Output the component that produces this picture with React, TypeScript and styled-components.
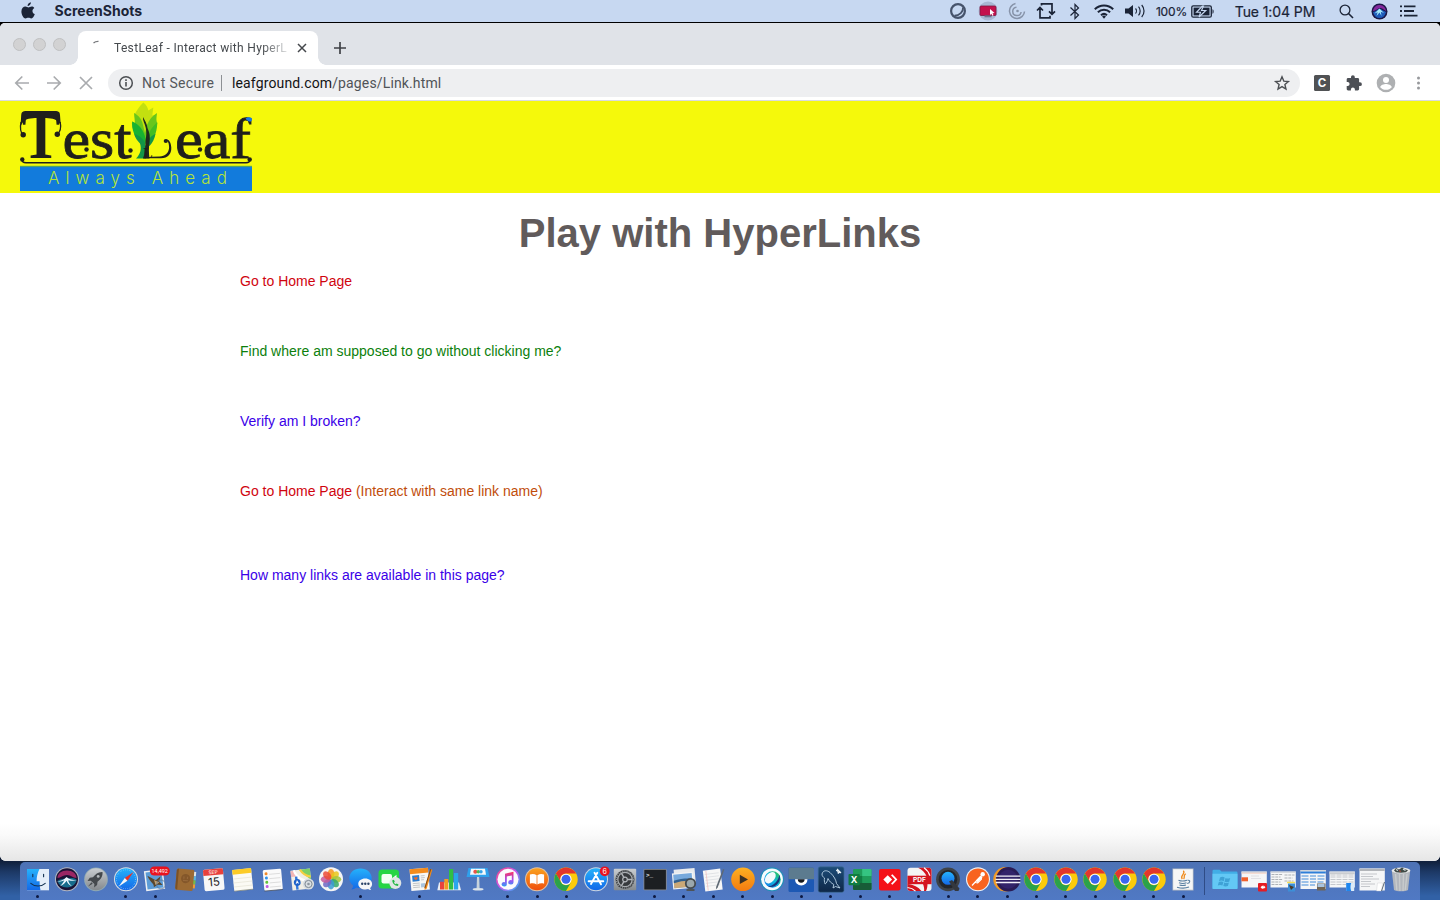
import React from "react";
import styled, { createGlobalStyle } from "styled-components";

const ink = "#1b2437";

const GlobalStyle = createGlobalStyle`
  html, body { margin: 0; padding: 0; overflow: hidden; }
  *, *::before, *::after { box-sizing: border-box; }
  svg { display: block; flex: none; overflow: visible; }
`;

const Desktop = styled.div`
  width: 1440px;
  height: 900px;
  display: flex;
  flex-direction: column;
  overflow: hidden;
  font-family: Inter, Roboto, "Liberation Sans", sans-serif;
  background:
    linear-gradient(to bottom, #000 0, #000 40px, transparent 40px),
    linear-gradient(to bottom, rgba(8, 16, 34, 0.9) 858px, rgba(12, 24, 50, 0.55) 872px, rgba(20, 40, 80, 0) 896px),
    #3161a6;
`;

/* ---------- menu bar ---------- */

const MenuBar = styled.header`
  height: 22px;
  flex: none;
  display: flex;
  align-items: center;
  background: #c7d8f1;
  margin-bottom: 1px;
  color: ${ink};
`;

const AppleSlot = styled.div`
  width: 55px;
  padding: 0 0 1px 20.5px;
`;

const AppName = styled.div`
  font-size: 14px;
  font-weight: 700;
  letter-spacing: 0.02px;
  line-height: 22px;
  white-space: nowrap;
  margin-left: -0.5px;
`;

const StatusItems = styled.div`
  display: flex;
  align-items: center;
  margin-left: auto;
  margin-right: 23px;
`;

const StatusItem = styled.div<{ $w: number }>`
  width: ${(p) => p.$w}px;
  height: 22px;
  display: flex;
  align-items: center;
  justify-content: center;
  white-space: nowrap;
`;

const Percent = styled.span`
  font-size: 12px;
  letter-spacing: -0.15px;
  padding-left: 2px;
  -webkit-text-stroke: 0.2px ${ink};
`;

const Clock = styled.span`
  font-size: 14px;
  letter-spacing: -0.1px;
  -webkit-text-stroke: 0.2px ${ink};
`;

/* ---------- browser window ---------- */

const Window = styled.main`
  height: 838px;
  flex: none;
  display: flex;
  flex-direction: column;
  border-radius: 5px 5px 6px 6px;
  overflow: hidden;
  background: #fff;
`;

const TabStrip = styled.div`
  height: 42px;
  flex: none;
  display: flex;
  align-items: flex-end;
  background: #e0e3e8;
`;

const WindowButtons = styled.div`
  display: flex;
  gap: 7px;
  width: 78px;
  padding: 0 0 14px 12.5px;
`;

const WindowButton = styled.span`
  width: 13px;
  height: 13px;
  border-radius: 50%;
  background: #d2d2d3;
  border: 1px solid #bfc0c1;
`;

const Tab = styled.div`
  position: relative;
  width: 240px;
  height: 34px;
  border-radius: 8px 8px 0 0;
  background: #fff;
  display: flex;
  align-items: center;
  padding-left: 14px;

  &::before,
  &::after {
    content: "";
    position: absolute;
    bottom: 0;
    width: 8px;
    height: 8px;
  }
  &::before {
    left: -8px;
    background: radial-gradient(circle at 0 0, transparent 7.5px, #fff 8px);
  }
  &::after {
    right: -8px;
    background: radial-gradient(circle at 100% 0, transparent 7.5px, #fff 8px);
  }
`;

const TabTitle = styled.div`
  width: 174px;
  margin-left: 6px;
  margin-right: 9px;
  white-space: nowrap;
  font-family: Roboto, "Liberation Sans", sans-serif;
  font-size: 12px;
  letter-spacing: 0.33px;
  line-height: 18px;
  color: #45494d;
  -webkit-mask-image: linear-gradient(to right, #000 148px, transparent 178px);
  mask-image: linear-gradient(to right, #000 148px, transparent 178px);
`;

const NewTab = styled.div`
  padding: 0 0 10px 15px;
`;

const Toolbar = styled.div`
  height: 36px;
  flex: none;
  display: flex;
  align-items: center;
  background: #fff;
  border-bottom: 1px solid #d9dbde;
`;

const NavButtons = styled.div`
  display: flex;
  gap: 16px;
  width: 108px;
  padding-left: 14px;
`;

const Omnibox = styled.div`
  width: 1192px;
  height: 28px;
  border-radius: 14px;
  background: #eeeff1;
  display: flex;
  align-items: center;
  padding: 0 10px;
  font-family: Roboto, "Liberation Sans", sans-serif;
  font-size: 14px;
  line-height: 28px;
  white-space: nowrap;
`;

const Security = styled.span`
  width: 80px;
  margin-left: 8px;
  letter-spacing: 0.35px;
  color: #55585c;
`;

const Divider = styled.span`
  width: 1px;
  height: 16px;
  margin-right: 10px;
  margin-left: -1px;
  background: #8d9094;
`;

const Url = styled.span`
  flex: 1;
  letter-spacing: 0.14px;
  color: #505357;
`;

const Host = styled.span`
  color: #121314;
`;

const Actions = styled.div`
  display: flex;
  align-items: center;
  gap: 12px;
  padding-left: 12px;
`;

const Content = styled.section`
  flex: 1;
  display: flex;
  flex-direction: column;
  background: linear-gradient(to top, #e6e6e6 0, #efefef 12px, #fafafa 26px, #fff 38px);
  font-family: "Liberation Sans", Arial, sans-serif;
`;

const Banner = styled.div`
  height: 92px;
  flex: none;
  padding-left: 20px;
  background: #f5f90b;
`;

const Heading = styled.h1`
  margin: 17px 0 0;
  font-size: 40px;
  line-height: 46px;
  font-weight: 700;
  text-align: center;
  color: #615b5b;
`;

const LinkList = styled.div`
  display: flex;
  flex-direction: column;
  margin: 17px 0 0 240px;
`;

const LinkRow = styled.div<{ $gap?: number }>`
  height: 16px;
  margin-bottom: ${(p) => p.$gap ?? 54}px;
  font-size: 14px;
  line-height: 16px;
  color: #c14d0b;
`;

const PageLink = styled.a<{ $color: string }>`
  color: ${(p) => p.$color};
  text-decoration: none;
`;

/* ---------- dock ---------- */

const DockBar = styled.footer`
  width: 1400px;
  height: 38px;
  flex: none;
  margin: 1px auto 0;
  padding-left: 3px;
  display: flex;
  border-radius: 5px 5px 0 0;
  background: linear-gradient(to bottom, #4d72b5, #5079c4);
`;

const DockCell = styled.div`
  width: 29.38px;
  height: 38px;
  flex: none;
  display: flex;
  flex-direction: column;
  align-items: center;
  padding-top: 4px;
`;

const RunningDot = styled.span`
  width: 3px;
  height: 3px;
  margin-top: 1px;
  border-radius: 50%;
  background: #0d1840;
`;

const DockSeparator = styled.span`
  width: 1px;
  height: 28px;
  margin: 5px 5px 0 6px;
  flex: none;
  background: #2f4c86;
`;

/* ---------- shared gradients ---------- */

const Gradients = () => (
  <svg width="0" height="0" style={{ position: "absolute" }} aria-hidden="true">
    <defs>
      <linearGradient id="silver" x1="0" y1="0" x2="0" y2="1">
        <stop offset="0" stopColor="#c9cdd0" />
        <stop offset="1" stopColor="#84898d" />
      </linearGradient>
      <linearGradient id="skyBlue" x1="0" y1="0" x2="0" y2="1">
        <stop offset="0" stopColor="#25b2fb" />
        <stop offset="1" stopColor="#1368e8" />
      </linearGradient>
      <linearGradient id="amber" x1="0" y1="0" x2="0" y2="1">
        <stop offset="0" stopColor="#fdb022" />
        <stop offset="1" stopColor="#f47b10" />
      </linearGradient>
      <linearGradient id="bookOrange" x1="0" y1="0" x2="0" y2="1">
        <stop offset="0" stopColor="#fba11d" />
        <stop offset="1" stopColor="#ef4e0d" />
      </linearGradient>
      <linearGradient id="tuneRing" x1="0" y1="0" x2="1" y2="1">
        <stop offset="0" stopColor="#f8447a" />
        <stop offset="0.5" stopColor="#c65af0" />
        <stop offset="1" stopColor="#25b6f4" />
      </linearGradient>
      <linearGradient id="note" x1="0" y1="0" x2="0" y2="1">
        <stop offset="0" stopColor="#fa3560" />
        <stop offset="0.55" stopColor="#a54df0" />
        <stop offset="1" stopColor="#2f9cf4" />
      </linearGradient>
      <linearGradient id="whale" x1="0" y1="0" x2="0" y2="1">
        <stop offset="0" stopColor="#1c4c78" />
        <stop offset="1" stopColor="#0e2747" />
      </linearGradient>
      <linearGradient id="webex" x1="0" y1="1" x2="1" y2="0">
        <stop offset="0" stopColor="#1473e8" />
        <stop offset="0.5" stopColor="#10b6e0" />
        <stop offset="1" stopColor="#2fc43c" />
      </linearGradient>
    </defs>
  </svg>
);

const Glyph = ({ children }: { children: React.ReactNode }) => (
  <svg width="28" height="28" viewBox="0 0 28 28">{children}</svg>
);

/* ---------- dock icons ---------- */

const Finder = () => (
  <Glyph>
    <rect x="3" y="3" width="22" height="21.3" fill="#e4eef9" />
    <path d="M3 3H15.5C13.5 7 12.6 11 12.6 15.2H15.6C15.5 18.5 15.8 21.5 16.5 24.3H3z" fill="url(#skyBlue)" />
    <path d="M8.8 8.3v2.5M19.6 8.3v2.5M6.8 17.3c4 3.6 10.5 3.6 14.4 0" fill="none" stroke="#12304f" strokeWidth="1.1" strokeLinecap="round" />
  </Glyph>
);

const Siri = () => (
  <Glyph>
    <circle cx="14" cy="13.3" r="12" fill="#b4b8c4" />
    <circle cx="14" cy="13.3" r="11" fill="#1a1436" />
    <path d="M4.500 12c0-4.500 4-7.500 9.500-7.500S23.500 7.500 23.500 12c-4 0-5-3-9.500-3S8 12 4.500 12z" fill="#c52c74" opacity=".75" />
    <path d="M4.500 15c2-2 6-2 9-2.500s7-1 10 1c0 4-4 8-9.500 8s-8.500-3-9.500-6.500z" fill="#1792b0" opacity=".7" />
    <path d="M3.800 15.500c4-.5 7-1.500 9.700-4.500 2.500 2.500 6 3 10.500 3-5 1.200-7.500.5-8.800.2.300 2.200 1.500 4 3.800 6-3-1-4.500-3-5.400-5.500-1.500 2-3 4-6.600 5.500 2-2 3.500-3.800 4.300-6-2.500 1.300-4.500 1.500-7.500 1.300z" fill="#ecf8ff" />
  </Glyph>
);

const Launchpad = () => (
  <Glyph>
    <circle cx="14" cy="13.3" r="11.900" fill="#8fa9b3" />
    <circle cx="14" cy="13.3" r="11" fill="url(#silver)" />
    <path d="M20.5 6c-4.500-.2-7 2-9.500 5.300l-3.200.5-2.300 3.200 3.300-.3 3.600 3.300-.3 3.500 3-2.500.4-3.300C19 13 20.900 10.500 20.500 6z" fill="#44494d" />
    <circle cx="16.2" cy="10.400" r="1.400" fill="#b4b9bc" />
    <path d="M9.500 16.200 6 20.500l4.700-2.800z" fill="#44494d" />
  </Glyph>
);

const Safari = () => (
  <Glyph>
    <circle cx="14" cy="13.3" r="12" fill="#d8dde2" />
    <circle cx="14" cy="13.3" r="11" fill="url(#skyBlue)" />
    <circle cx="14" cy="13.3" r="9.500" fill="none" stroke="#bfe3ff" strokeWidth="1" strokeDasharray=".4 1.500" />
    <path d="M21.500 6 12.800 12 15.400 14.800z" fill="#ee3124" />
    <path d="M6.500 20.800 12.800 12 15.400 14.800z" fill="#f5f6f7" />
  </Glyph>
);

const Mail = () => (
  <Glyph>
    <g transform="rotate(-7 14 14)">
      <rect x="4" y="4" width="19" height="20" fill="#eef1f3" />
      <rect x="5.500" y="5.500" width="16" height="17" fill="#5c9cd6" />
      <path d="M7 9c4 2 5 4 8 5l5-3-2 5 3 4-5-1-4 2c1-4-3-5-5-12z" fill="#59462e" />
      <path d="M13 14l5 3-4 2z" fill="#c0a071" />
    </g>
    <circle cx="20" cy="18.500" r="4.300" fill="none" stroke="#5f7898" strokeWidth="1.200" opacity=".65" />
    <rect x="8.800" y="0.400" width="20" height="9.200" rx="4.600" fill="#e8131f" />
    <text x="10.500" y="7.300" fontSize="6.200" fill="#fff" textLength="16.400" lengthAdjust="spacingAndGlyphs" fontFamily="Roboto, sans-serif">14,492</text>
  </Glyph>
);

const Contacts = () => (
  <Glyph>
    <g transform="rotate(5 14 14)">
      <path d="M22 5h2.500v4.500H22z" fill="#dfe4e6" />
      <path d="M22 9.500h2.700v4H22z" fill="#5cb6dd" />
      <path d="M22 13.500h2.600v4H22z" fill="#74bd4b" />
      <path d="M22 17.500h2.500v4H22z" fill="#ef9b33" />
      <rect x="5" y="3" width="17.500" height="21.500" rx="1.500" fill="#9b6a33" />
      <path d="M5 4.500v18.500l2 1.500V3z" fill="#7b5125" />
      <circle cx="14.500" cy="12.500" r="4.600" fill="#84572a" />
      <path d="M12.700 10.500v2.300M16.300 10.500v2.300M12 14.500h5" stroke="#97683a" strokeWidth="1.200" />
    </g>
  </Glyph>
);

const Calendar = () => (
  <Glyph>
    <g transform="rotate(-5 14 14)">
      <rect x="3.800" y="3" width="20" height="21.500" rx="1.500" fill="#f7f7f7" />
      <path d="M3.800 9V4.500A1.500 1.500 0 0 1 5.300 3h17a1.500 1.500 0 0 1 1.500 1.500V9z" fill="#e8413c" />
      <text x="13.800" y="7.800" fontSize="4.800" fill="#fff" textAnchor="middle" fontFamily="Inter, sans-serif">SEP</text>
      <text x="13.800" y="20" fontSize="11.500" fill="#222" textAnchor="middle" fontFamily="Inter, sans-serif">15</text>
    </g>
  </Glyph>
);

const Notes = () => (
  <Glyph>
    <g transform="rotate(-6 14 14)">
      <rect x="4.200" y="3" width="19" height="21.500" rx="1" fill="#fbfaf4" />
      <rect x="4.200" y="3" width="19" height="4.700" fill="#fccb26" />
      <path d="M4.200 12h19M4.200 16h19M4.200 20h19" stroke="#e6e3d6" strokeWidth=".7" />
      <path d="M4.200 24.200h19" stroke="#6d705f" strokeWidth=".6" />
    </g>
  </Glyph>
);

const Reminders = () => (
  <Glyph>
    <g transform="rotate(-5 14 14)">
      <rect x="4.500" y="3.300" width="18.500" height="21" rx="1.500" fill="#fafafa" />
      <circle cx="7.600" cy="7.200" r="1.500" fill="#f18a2b" />
      <circle cx="7.600" cy="11.500" r="1.500" fill="#2f93ee" />
      <circle cx="7.600" cy="15.800" r="1.500" fill="#62c33c" />
      <circle cx="7.600" cy="20" r="1.500" fill="#c05be0" />
      <path d="M10.500 8h11M10.500 12.300h11M10.500 16.600h11M10.500 20.800h11" stroke="#d2d2d2" strokeWidth=".7" />
      <path d="M4.500 24.300H23" stroke="#4b5260" strokeWidth=".8" />
    </g>
  </Glyph>
);

const Maps = () => (
  <Glyph>
    <g transform="rotate(-6 14 14)">
      <rect x="3.500" y="3.500" width="19.500" height="20" fill="#f1efe6" />
      <path d="M12 3.500h11V15z" fill="#7ed067" />
      <path d="M3.500 4h5v6h-5z" fill="#f2b6b6" />
      <path d="M7 3.500c1 7 8 12 16 13" fill="none" stroke="#fff" strokeWidth="2.400" />
      <path d="M13 3.500c2 4 5 7 10 8" fill="none" stroke="#f6cf43" strokeWidth="2" />
      <path d="M8.500 10v13" stroke="#3178dd" strokeWidth="2.400" />
      <circle cx="9" cy="16" r="3.400" fill="#1e62c9" />
      <path d="M9 13.500l1.800 4-1.800-.9-1.800.9z" fill="#fff" />
    </g>
    <circle cx="20.500" cy="18" r="5.600" fill="#d9dee2" />
    <circle cx="20.500" cy="18" r="3.600" fill="none" stroke="#7f8a93" strokeWidth="1" />
    <circle cx="20.500" cy="18" r="1.300" fill="#8d979f" />
  </Glyph>
);

const petals = ["#f8951d", "#e9c51b", "#a4c639", "#35a96b", "#3a9bd3", "#6d68c4", "#c55a9c", "#ec4b37"];
const Photos = () => (
  <Glyph>
    <circle cx="14" cy="13.300" r="12" fill="#f5f5f5" />
    {petals.map((c, i) => (
      <ellipse key={c} cx="14" cy="8" rx="3.400" ry="4.900" fill={c} opacity=".85" transform={`rotate(${i * 45} 14 13.3)`} />
    ))}
  </Glyph>
);

const Messages = () => (
  <Glyph>
    <path d="M13.500 2.500c6.400 0 11.200 4.200 11.200 9.800S19.900 22 13.500 22c-1.500 0-2.900-.2-4.200-.6-1.300 1.300-3.200 2-5 2 1.100-1 1.800-2.400 1.800-3.900-2.400-1.700-3.800-4.300-3.800-7.200 0-5.600 4.800-9.800 11.200-9.800z" fill="url(#skyBlue)" />
    <path d="M18.200 12.500c3.900 0 6.900 2.300 6.900 5.400 0 1.600-.8 3-2 4 .1.900.5 1.600 1.100 2.200-1.200 0-2.300-.4-3-1-4.500 1.400-9.900-1-9.900-5.200 0-3.100 3-5.400 6.900-5.400z" fill="#f6f7f8" />
    <circle cx="15.200" cy="17.800" r="1.200" fill="#2c4468" />
    <circle cx="18.300" cy="17.800" r="1.200" fill="#2c4468" />
    <circle cx="21.400" cy="17.800" r="1.200" fill="#2c4468" />
  </Glyph>
);

const FaceTime = () => (
  <Glyph>
    <rect x="2.500" y="3.500" width="20.500" height="19" rx="3.500" fill="#26d544" />
    <rect x="5.500" y="8" width="10.500" height="9.500" rx="2" fill="#f3fff4" />
    <path d="M16.500 12l4-3.300v7.800l-4-3z" fill="#f3fff4" />
    <circle cx="19.300" cy="17" r="6" fill="#dfe5e4" />
    <path d="M16.300 14.300c0 3.200 2.600 5.700 5.700 5.700l.5-1.600-1.900-1-1 .8c-.8-.4-1.300-1-1.600-1.700l.8-1-1-1.700z" fill="#23b845" />
  </Glyph>
);

const Pages = () => (
  <Glyph>
    <g transform="rotate(-5 14 14)">
      <rect x="4.500" y="2.500" width="18.500" height="21.800" fill="#f7f7f5" />
      <rect x="4.500" y="2.500" width="18.500" height="4.800" fill="#f38b1c" />
      <rect x="6.500" y="9" width="7" height="6" fill="#2b7dd0" />
      <path d="M10 14l-2-2.300 1-1.200 1 .8 1-.8 1 1.200z" fill="#f26a25" />
      <path d="M6.500 17h7M6.500 19h7M6.500 21h7M15 10h4M15 12h4M15 14h3" stroke="#b9bbbd" strokeWidth=".8" />
      <rect x="14.500" y="17.500" width="4.500" height="4" fill="#a9c4de" />
    </g>
    <path d="M24.300 2.800l2 1-5.600 18.700-2 1.600-.2-2.700z" fill="#ef8a1b" />
    <path d="M24.800 3l-5.900 19" stroke="#653912" strokeWidth=".8" />
  </Glyph>
);

const Numbers = () => (
  <Glyph>
    <path d="M4 16.500h20l2 7.800H2.300z" fill="#e9edf3" />
    <rect x="5" y="15.800" width="4" height="7.700" fill="#e9423d" />
    <rect x="9.300" y="13" width="4" height="10.500" fill="#f29b22" />
    <rect x="14" y="3" width="4.200" height="20.500" rx=".6" fill="#30bf45" />
    <rect x="19" y="7" width="4.200" height="16.500" fill="#2aa5ec" />
  </Glyph>
);

const Keynote = () => (
  <Glyph>
    <path d="M4.500 2h19l2 9h-23z" fill="#2fa0ec" />
    <path d="M7 2.800h14l1 6H6z" fill="#f5f8fa" />
    <circle cx="11.300" cy="5.800" r="2" fill="#ea5347" />
    <circle cx="14.300" cy="5.800" r="1.800" fill="#4cba55" />
    <circle cx="17" cy="5.800" r="1.700" fill="#37a3e6" />
    <path d="M13 11h2.200l.4 11h-3z" fill="#c6d2dc" />
    <ellipse cx="14.100" cy="23.300" rx="5.500" ry="1.300" fill="#dbe3ea" />
  </Glyph>
);

const Music = () => (
  <Glyph>
    <circle cx="14" cy="13.300" r="12" fill="url(#tuneRing)" />
    <circle cx="14" cy="13.300" r="10.500" fill="#fbfbfc" />
    <path d="M11 7.800l8.500-2v10.500a2.600 2.200 0 1 1-1.700-2V9.400l-5 1.200v7.600a2.600 2.200 0 1 1-1.800-2z" fill="url(#note)" />
  </Glyph>
);

const Books = () => (
  <Glyph>
    <circle cx="14" cy="13.300" r="12" fill="#dfc2a5" />
    <circle cx="14" cy="13.300" r="11" fill="url(#bookOrange)" />
    <path d="M13.600 9.200C11.500 7.700 9 7.600 6.900 8.500v9.300c2.200-.8 4.600-.6 6.700.8zM14.400 9.200c2.100-1.500 4.600-1.600 6.700-.7v9.300c-2.200-.8-4.600-.6-6.700.8z" fill="#fff" />
  </Glyph>
);

const Chrome = () => (
  <Glyph>
    <circle cx="14" cy="13.300" r="11.700" fill="#fbcb0b" />
    <path d="M3.870 7.450A11.700 11.700 0 0 1 24.130 7.450H14a5.850 5.850 0 0 0-5.070 8.780z" fill="#e2362c" />
    <path d="M3.870 7.450A11.700 11.700 0 0 0 14 25l5.070-8.780a5.850 5.850 0 0 1-10.140 0z" fill="#2aa24a" />
    <circle cx="14" cy="13.300" r="5.600" fill="#fff" />
    <circle cx="14" cy="13.300" r="4.500" fill="#3a66f0" />
  </Glyph>
);

const AppStore = () => (
  <Glyph>
    <circle cx="14" cy="13.300" r="12" fill="#cfd7e0" />
    <circle cx="14" cy="13.300" r="11" fill="url(#skyBlue)" />
    <path d="M15.300 6.800L9 18M12.500 6.800l6.500 11.500M6.600 15.300h9.800M18.300 15.300h3" stroke="#fff" strokeWidth="1.900" strokeLinecap="round" />
    <circle cx="22.700" cy="5.300" r="4.900" fill="#e8131f" />
    <text x="22.700" y="7.900" fontSize="7" fill="#fff" textAnchor="middle" fontFamily="Inter, sans-serif">6</text>
  </Glyph>
);

const Settings = () => (
  <Glyph>
    <rect x="2.800" y="2.800" width="22.400" height="21.500" rx="1" fill="url(#silver)" />
    <circle cx="14" cy="13.500" r="9.500" fill="#373a3d" />
    <circle cx="14" cy="13.500" r="7.200" fill="none" stroke="#a9adb1" strokeWidth="1.300" />
    <circle cx="14" cy="13.500" r="8.600" fill="none" stroke="#8c9094" strokeWidth="1.300" strokeDasharray="1.100 1.100" />
    <circle cx="14" cy="13.500" r="2.300" fill="none" stroke="#b1b5b9" strokeWidth="1.200" />
    <path d="M16 13.500h5M13 15.300l-2.500 4.300M13 11.700l-2.500-4.300" stroke="#b1b5b9" strokeWidth="1.400" />
  </Glyph>
);

const Terminal = () => (
  <Glyph>
    <rect x="2.500" y="3" width="23.200" height="21.300" rx="1" fill="#8a8c8f" />
    <rect x="3.300" y="3.800" width="21.600" height="19.700" fill="#1c1f22" />
    <text x="5" y="10.800" fontSize="6" fontWeight="700" fill="#e9e9e9" fontFamily="'Liberation Mono', monospace">&gt;_</text>
  </Glyph>
);

const Preview = () => (
  <Glyph>
    <g transform="rotate(-5 14 14)">
      <rect x="4.500" y="3" width="21" height="15" fill="#e8eaed" />
      <rect x="2.500" y="6.500" width="21" height="16" fill="#f2f3f4" />
      <rect x="3.700" y="7.800" width="18.500" height="13.500" fill="#77a9dc" />
      <path d="M3.700 15c5-2 10-2 18.500-1v7.300H3.700z" fill="#caa877" />
      <path d="M3.700 13.800c6-1.600 11-1.400 18.500-.6v2.300c-7-1-12-.8-18.500.8z" fill="#31608f" />
    </g>
    <circle cx="20.500" cy="17.500" r="4.700" fill="#9aa7ad" stroke="#454b50" strokeWidth="1.800" />
    <path d="M16.500 24h8" stroke="#4d5358" strokeWidth="2" />
  </Glyph>
);

const TextEdit = () => (
  <Glyph>
    <g transform="rotate(-7 14 14)">
      <rect x="5" y="3.500" width="17.500" height="21" fill="#f7f7f7" />
      <path d="M6.500 7.500h14M6.500 10.500h14M6.500 13.500h14M6.500 16.500h14M6.500 19.500h14" stroke="#d9dce0" strokeWidth=".7" />
      <path d="M8 4v20" stroke="#efb4b4" strokeWidth=".6" />
    </g>
    <path d="M24 3l1.400.6-6.700 18-1.800 2 .3-2.800z" fill="#5e6974" />
  </Glyph>
);

const Player = () => (
  <Glyph>
    <circle cx="14" cy="13.300" r="11.800" fill="url(#amber)" />
    <path d="M10.800 8.800l8.200 4.600-8.200 4.600z" fill="#3c3124" />
  </Glyph>
);

const Webex = () => (
  <Glyph>
    <circle cx="14" cy="13.300" r="12" fill="#1f8fb8" />
    <circle cx="14" cy="13.300" r="10.900" fill="#f6fbfd" />
    <circle cx="14.500" cy="13.500" r="8.300" fill="url(#webex)" />
    <path d="M21.500 8.500c2.500 7-4 14.500-12 12.200 6-.7 11-5.700 12-12.200z" fill="#1a357c" />
    <ellipse cx="12.300" cy="11.700" rx="6.600" ry="4.300" transform="rotate(-48 12.3 11.7)" fill="#f4fbfc" />
  </Glyph>
);

const Eye = () => (
  <Glyph>
    <rect x="1.500" y="1.500" width="25.500" height="24.500" rx="1.500" fill="#1d59b4" />
    <path d="M1.500 13.300V3A1.500 1.500 0 0 1 3 1.500h22.500A1.500 1.500 0 0 1 27 3v10.300z" fill="#5c7b8f" />
    <path d="M8 13.300h12.500a6.200 6.200 0 0 1-12.500 0z" fill="#fff" />
    <path d="M10.800 13.300h6.800a3.400 3.400 0 0 1-6.800 0z" fill="#15181c" />
  </Glyph>
);

const Workbench = () => (
  <Glyph>
    <rect x="1.200" y=".8" width="25.800" height="25.500" rx="2" fill="url(#whale)" stroke="#3d6d97" strokeWidth=".7" />
    <path d="M5 8c1-4 5-4 8-1.500 4 3.500 6 7.500 6.500 11l3.500 4.500-4.500-1.500-2.500 1.500.8-3.500c-2.500-1.500-4.500-3-5.800-6-.8 3-1.500 4.500-2.800 5.500-1-2-1-4-.7-6C5.800 10.800 5 10 5 8z" fill="none" stroke="#b9d3e6" strokeWidth=".9" />
    <path d="M19 4.500c2 0 2.500 1.500 2 3l2-2M20 3l4 4" fill="none" stroke="#e5eef5" strokeWidth="1.200" />
  </Glyph>
);

const Excel = () => (
  <Glyph>
    <rect x="7" y="3" width="18.500" height="21" rx="1.200" fill="#1f9c59" />
    <path d="M16.200 3h8.100a1.200 1.200 0 0 1 1.200 1.200V10h-9.300z" fill="#35c481" />
    <path d="M7 10h9.200v7H7z" fill="#117a42" />
    <path d="M7 17h18.500v5.800a1.200 1.200 0 0 1-1.200 1.200H8.200A1.200 1.200 0 0 1 7 22.800z" fill="#185c37" />
    <rect x="2.500" y="8" width="11.300" height="11.300" rx="1" fill="#107c41" />
    <text x="8.150" y="17" fontSize="9" fontWeight="700" fill="#fff" textAnchor="middle" fontFamily="Inter, sans-serif">X</text>
  </Glyph>
);

const AnyDesk = () => (
  <Glyph>
    <rect x="3" y="3" width="21.500" height="21.500" rx="2" fill="#f41118" />
    <path d="M11.700 9.200l4.400 4.400-4.400 4.400-4.400-4.400z" fill="#fff" />
    <path d="M15 9.200l1.400-.9 5 5.300-5 5.100L15 17.800l4-4.200z" fill="#fff" />
  </Glyph>
);

const Pdf = () => (
  <Glyph>
    <rect x="2.500" y="1.800" width="24" height="23.300" rx="3" fill="#f4f4f4" />
    <path d="M13 1.800h10.500a3 3 0 0 1 3 3V10h-5C20 6.500 17 3.500 13 1.800z" fill="#d4141f" />
    <path d="M19 1.800c3 2 5 5 6 8.200" fill="none" stroke="#fff" strokeWidth="1.200" />
    <path d="M2.500 18c6 .5 11 3 14 7.100h-11a3 3 0 0 1-3-3zM18 18h4.500c0 2.500-.5 5-1.500 7.100h-2C19.500 23 18.800 20 18 18z" fill="#d4141f" />
    <path d="M2.500 21.500c3 .3 6 1.600 8 3.600" fill="none" stroke="#fff" strokeWidth="1.200" />
    <rect x="2.500" y="9.700" width="24" height="8.500" fill="#d4141f" />
    <text x="14.500" y="16.300" fontSize="6.600" fontWeight="700" fill="#fff" textAnchor="middle" fontFamily="Inter, sans-serif">PDF</text>
  </Glyph>
);

const QuickTime = () => (
  <Glyph>
    <circle cx="14" cy="13.300" r="11.900" fill="#3e4247" />
    <circle cx="14" cy="13.300" r="9.300" fill="#23262b" />
    <circle cx="14" cy="12.300" r="6.500" fill="url(#skyBlue)" />
    <path d="M15 15.500l3-1.500 7.500 8.500-1 2.500H21z" fill="#34383e" />
  </Glyph>
);

const Postman = () => (
  <Glyph>
    <circle cx="14" cy="13.300" r="12" fill="#eef1f5" />
    <circle cx="14" cy="13.300" r="10.900" fill="#f8631f" />
    <circle cx="18.700" cy="8.200" r="2.200" fill="#fff" />
    <path d="M17 10l-9 9.500M16.500 10.500l1 2.500-4 4-2-.5" fill="none" stroke="#fff" strokeWidth="1.200" strokeLinejoin="round" />
    <path d="M17 9.500l1.500 2-5 4.700-1.500-1.700z" fill="#fff" />
  </Glyph>
);

const Eclipse = () => (
  <Glyph>
    <circle cx="12.500" cy="13.300" r="12.200" fill="#f09a24" />
    <circle cx="15.200" cy="13.300" r="12.200" fill="#2a1c56" />
    <circle cx="15.200" cy="13.300" r="9.500" fill="#33246a" />
    <path d="M2.800 10.100h24.500M2.500 13.300h25M2.800 16.500h24.500" stroke="#f3f1f8" strokeWidth="1.300" />
  </Glyph>
);

const Java = () => (
  <Glyph>
    <rect x="3.500" y="2.500" width="21" height="22" fill="#b4bac2" />
    <rect x="4.200" y="3.200" width="19.600" height="20.500" fill="#f6f6f6" />
    <path d="M14.300 4.800c3 3-4 4.500-1 8.200M16.800 7.700c-3.200 2-.3 3.300-2.200 5.300" fill="none" stroke="#f08b1c" strokeWidth="1.300" />
    <path d="M9.500 14.200c2 .9 6 .9 8.500 0M10 16.700c2 .8 5.500.8 7.500 0M10.500 19c2 .6 4.500.6 6.500 0M8 21.200c3.500 1 9 1 12-.2M18.500 14.300c3-.6 3 2.500-.3 3.200" fill="none" stroke="#5a7fa1" strokeWidth="1.100" />
  </Glyph>
);

const Folder = () => (
  <Glyph>
    <path d="M1.500 5a1.200 1.200 0 0 1 1.200-1.200h6l1.800 1.800h14.800A1.200 1.200 0 0 1 26.500 6.800V23h-25z" fill="#41aee6" />
    <path d="M1.500 7.800h25V22a1 1 0 0 1-1 1h-23a1 1 0 0 1-1-1z" fill="#63c8f5" />
    <path d="M9 11.500c1.700-.9 3.200-.8 4.700 0l-1 3.700c-1.500-.8-3-.8-4.700 0zM14.500 12c1.500.7 3 .7 4.700 0l-1 3.700c-1.700.7-3.200.6-4.700 0zM7.800 16c1.700-.8 3.200-.7 4.600 0l-1 3.500c-1.400-.7-3-.7-4.600 0zM13.200 16.500c1.500.7 3 .7 4.700 0l-1 3.500c-1.700.7-3.200.6-4.600 0z" fill="#3fa2d6" />
  </Glyph>
);

type ThumbKind = "anydesk" | "mail" | "preview" | "finder" | "text";
const Thumb = ({ kind }: { kind: ThumbKind }) => {
  const tall = kind === "text";
  const top = tall ? 2.500 : kind === "preview" ? 4 : 5.500;
  const height = tall ? 22 : kind === "preview" ? 19 : 16;
  return (
    <Glyph>
      <rect x="1.500" y={top} width="25.300" height={height} fill="#f5f6f7" />
      <path d={`M1.500 ${top + 0.700}h25.300`} stroke="#cfd3d8" strokeWidth="1.300" />
      {kind === "anydesk" && (
        <>
          <path d="M1.500 7.200h25.300" stroke="#f3c6b8" strokeWidth=".8" />
          <rect x="1.500" y="11.300" width="6.500" height="4" fill="#f1602c" />
          <path d="M11 10h8M11 12.500h10" stroke="#dadcdf" strokeWidth=".8" />
          <rect x="18" y="17" width="9" height="8.500" rx="1" fill="#e41c24" />
          <path d="M20.500 21.200l1.800-1.800 1.800 1.800-1.800 1.800zM23.500 19.300l2 1.900-2 1.900" fill="#fff" />
        </>
      )}
      {kind === "mail" && (
        <>
          <path d="M2.500 8.500h11M2.500 11h9M2.500 13.500h11M2.500 16h9M2.500 18.500h11M15.500 9h10M15.500 12h8M15.500 15h9" stroke="#a6aaaf" strokeWidth=".9" strokeDasharray="3 .8" />
          <path d="M18 16.500h8" stroke="#f4de55" strokeWidth="1.500" />
          <rect x="19" y="17.500" width="7" height="8" fill="#3c8fd8" />
          <path d="M20 19l5 2-3 3z" fill="#4a3a26" />
        </>
      )}
      {kind === "preview" && (
        <>
          <path d="M1.500 6.500h25.300" stroke="#2e7fd8" strokeWidth="2" />
          <path d="M2.500 10h7M2.500 13h7M2.500 16h7M2.500 19h7M11 10h6M11 13h6M11 16h6M11 19h5M18.500 10h7M18.500 13h7M18.500 16h6" stroke="#7fb0e3" strokeWidth="1.600" />
          <rect x="18" y="17.500" width="8.500" height="7" fill="#6f6456" />
          <path d="M18.500 18h7v3h-7z" fill="#a9c3de" />
        </>
      )}
      {kind === "finder" && (
        <>
          <path d="M2.500 9h23M2.500 11h23M2.500 13.500h23M2.500 16h23M2.500 18.500h16" stroke="#b9bdc2" strokeWidth=".8" strokeDasharray="5 1" />
          <path d="M1.500 7.500h25.300" stroke="#c9ccd0" strokeWidth="1.400" />
          <rect x="18.200" y="17" width="8" height="8" fill="#dcebf8" />
          <path d="M18.200 17h5c-1 3-1 5 0 8h-5z" fill="#1f86ee" />
        </>
      )}
      {kind === "text" && (
        <>
          <path d="M1.500 4h25.300" stroke="#b2b5b9" strokeWidth="2" />
          <path d="M3 8h16M3 10.500h12M3 13h18M3 15.500h10M3 18h14M3 20.500h9" stroke="#b9bcc0" strokeWidth=".8" />
          <path d="M19.500 17h5l-1 8h-5z" fill="#fff" stroke="#c9ccd0" strokeWidth=".4" />
          <path d="M26.500 16l-3 9" stroke="#5e6974" strokeWidth="1" />
        </>
      )}
    </Glyph>
  );
};

const Trash = () => (
  <Glyph>
    <path d="M4.800 4.500h18.400L21 24c-2 1.800-12 1.800-14 0z" fill="#b8bbbd" opacity=".95" />
    <path d="M8.500 8l1.300 16M12.500 8l.4 17M16.500 8l-.5 17M20 8l-1.800 16" stroke="#c9cccd" strokeWidth="1.300" />
    <ellipse cx="14" cy="4.500" rx="9.400" ry="3" fill="#e6e7e8" />
    <path d="M7 4.500l2-2.500 3 1.500 3-2 3 1.700 3 1-2 2-5 .6-5-.5z" fill="#3f4b46" />
    <path d="M9 3.500l2 1M16 3l2.500 1.500" stroke="#d7dde0" strokeWidth="1.200" />
    <path d="M12 4.800l2 .5" stroke="#c14a3a" strokeWidth="1" />
  </Glyph>
);

const apps: [string, React.FC, boolean?][] = [
  ["Finder", Finder, true], ["Siri", Siri], ["Launchpad", Launchpad], ["Safari", Safari, true],
  ["Mail", Mail, true], ["Contacts", Contacts], ["Calendar", Calendar], ["Notes", Notes],
  ["Reminders", Reminders], ["Maps", Maps], ["Photos", Photos], ["Messages", Messages, true],
  ["FaceTime", FaceTime], ["Pages", Pages, true], ["Numbers", Numbers], ["Keynote", Keynote],
  ["Music", Music, true], ["Books", Books, true], ["Chrome", Chrome, true], ["App Store", AppStore],
  ["Settings", Settings], ["Terminal", Terminal, true], ["Preview", Preview, true], ["TextEdit", TextEdit, true],
  ["Player", Player, true], ["Webex", Webex, true], ["Eye", Eye, true], ["Workbench", Workbench, true],
  ["Excel", Excel, true], ["AnyDesk", AnyDesk, true], ["PDF", Pdf, true], ["QuickTime", QuickTime, true],
  ["Postman", Postman, true], ["Eclipse", Eclipse, true], ["Chrome 2", Chrome, true], ["Chrome 3", Chrome, true],
  ["Chrome 4", Chrome, true], ["Chrome 5", Chrome, true], ["Chrome 6", Chrome, true], ["Java", Java, true],
];
const thumbs: ThumbKind[] = ["anydesk", "mail", "preview", "finder", "text"];

const Dock = () => (
  <DockBar>
    {apps.map(([name, Icon, running]) => (
      <DockCell key={name}>
        <Icon />
        {running && <RunningDot />}
      </DockCell>
    ))}
    <DockSeparator />
    <DockCell><Folder /></DockCell>
    {thumbs.map((kind) => (
      <DockCell key={kind}><Thumb kind={kind} /></DockCell>
    ))}
    <DockCell><Trash /></DockCell>
  </DockBar>
);

/* ---------- site logo ---------- */

const Logo = () => (
  <svg width="232" height="91" viewBox="20 101 232 91">
    <g fill="#1f1f1c" fontFamily="'Liberation Serif', serif">
      <text x="22" y="158.300" fontSize="70" fontWeight="700" textLength="38" lengthAdjust="spacingAndGlyphs">T</text>
      <path d="M20.500 127l.7-12c.3-3 1.500-4 4.500-4H55c3.500 0 4.800 1 5 4l.8 11c-1.500-4.500-5-7-10-7.500L46 118H35l-4.500.5c-5 .5-8.500 3.500-10 8.500z" />
      <path d="M21 122c-1.200 6-.6 10 2 13M60.200 122c1.200 6 0 10-3 12.500" fill="none" stroke="#1f1f1c" strokeWidth="1.300" />
      <circle cx="23.200" cy="134.800" r="2.700" />
      <circle cx="57.300" cy="134.300" r="2.700" />
      <g stroke="#1f1f1c" strokeWidth=".8">
        <text x="62.500" y="158.300" fontSize="58" textLength="69" lengthAdjust="spacingAndGlyphs">est</text>
        <text x="175" y="158.300" fontSize="58" textLength="76" lengthAdjust="spacingAndGlyphs">eaf</text>
      </g>
      <circle cx="86.500" cy="149.500" r="2.200" />
      <circle cx="130.500" cy="150.500" r="2.200" />
      <circle cx="200" cy="149.500" r="2.200" />
    </g>
    <path d="M143.300 102.500c-4 4-7 8-9 13l4 14 5 8 5-3 4-14 4-6-4 1 1-8-5 3c-.5-3-2-6-5-8z" fill="#c3e010" />
    <path d="M134 113c4 2 8 6 9 12l2 8 2-8c2-5 5-9 10-12-.5 5-1 7 .3 10-1 8-5 15-11 20l-5-2c-6-6-10-13-9.300-19.500l3 2z" fill="#68c61c" />
    <path d="M132.300 121.500c7 3 11.500 9 13 16.500l.5 6-5-1.500c-6-5-9.500-13-8.500-21z" fill="#17b232" />
    <path d="M157.300 122.500c-5 4-8.500 9-9.300 15v6c5-2 9-10 9.300-21z" fill="#42bd22" />
    <path d="M134 134c7 2 10.500 6 11.500 11l1.500 5-1 8.500h-10c4-4 6-9 4-15-2.500-2.500-4.500-5-6-9.500zM155.500 134c-5 2-7 5-8 10l2 2c3-3 5-7 6-12z" fill="#129647" />
    <path d="M143 117c-.5 3.500 2 7 2.800 11 .7 4 .7 8-.3 12 0 6-.5 13-2.500 18.500h6.500c-.8-6-.8-11 0-16 .8-5.500.2-10-2-14.500-.5-4-2.500-7.500-4.500-11z" fill="#1f2a1c" />
    <text x="143.300" y="158.300" fontSize="14" fontFamily="'Liberation Serif', serif" fontWeight="700" textLength="12" fill="#1f1f1c">L</text>
    <path d="M144 158.300h17c7 0 10.500-4.500 10.300-10.500-.2-6-3-9-5.500-8 2 .5 3.500 4 3.300 8-.3 5-4 8.500-9.500 8.800l-9 .2z" fill="#1f1f1c" />
    <circle cx="165.800" cy="141" r="2.100" fill="#1f1f1c" />
    <path d="M245.500 118.500c2.500-2.200 6.500-1.500 6.500.8 0 3.200-3.700 3.200-6.500-.8z" fill="#1677e6" />
    <path d="M22 159.500c0 2.500 1 3.200 4 3.200h220c3 0 4-.7 4-3.200" fill="none" stroke="#1f1f1c" strokeWidth="1.400" />
    <circle cx="22.300" cy="159.500" r="2.200" fill="#1f1f1c" />
    <circle cx="249.700" cy="159.500" r="2.200" fill="#1f1f1c" />
    <rect x="20" y="166.300" width="232" height="24.700" fill="#127bdc" />
    <rect x="20" y="165.800" width="232" height="1.300" fill="#4da36a" />
    <text x="48" y="184" fontSize="17" fontFamily="Inter, sans-serif" fontWeight="300" fill="#b5e437" textLength="179">Always Ahead</text>
  </svg>
);

/* ---------- menu bar glyphs ---------- */

const AppleMark = () => (
  <svg width="14" height="17" viewBox="0 0 14 17" fill={ink}>
    <path d="M9.900.3c.1 1.900-1.400 3.700-3.300 3.800C6.400 2.300 8.100.5 9.900.3zM13.300 5.900c-2.700 1.500-2.300 5.100.5 6.200-.6 1.900-2 4.400-3.500 4.400-1.200 0-1.500-.7-2.900-.7s-1.800.7-2.900.7C2.700 16.500.4 12.900.4 9.500c0-3.200 2-4.900 4-4.900 1.300 0 2.300.8 3.100.8.700 0 1.900-.9 3.400-.9.600 0 1.700.2 2.400 1.400z" />
  </svg>
);

const MenuExtras = () => (
  <StatusItems>
    <StatusItem $w={30}>
      <svg width="18" height="18" viewBox="0 0 18 18">
        <circle cx="9" cy="9" r="6.900" fill="none" stroke="#46536b" strokeWidth="2.200" />
        <path d="M14 5.500c.5 4-3.500 8-8.500 8.200" fill="none" stroke="#46536b" strokeWidth="1.800" />
      </svg>
    </StatusItem>
    <StatusItem $w={30}>
      <svg width="20" height="20" viewBox="0 0 20 20">
        <circle cx="10" cy="10" r="9.500" fill="#a8b7d3" />
        <rect x="2" y="5" width="16" height="9.500" rx="1" fill="#c3114d" stroke="#7e1742" strokeWidth=".8" />
        <rect x="6.500" y="14.500" width="7" height="1.800" fill="#6d7890" />
        <path d="M12 8l4.500 4-2 .2 1 2-1.200.5-.9-2-1.400 1.200z" fill="#fff" />
      </svg>
    </StatusItem>
    <StatusItem $w={28}>
      <svg width="18" height="18" viewBox="0 0 18 18" fill="none" stroke="#8793a9" strokeWidth="1.500">
        <path d="M7.500 1.600A7.500 7.500 0 1 0 16.500 9.500M8.500 5.200a4.200 4.200 0 1 0 4.600 4.800" />
        <circle cx="9.500" cy="9" r="1.300" fill="#8793a9" stroke="none" />
      </svg>
    </StatusItem>
    <StatusItem $w={30}>
      <svg width="20" height="18" viewBox="0 0 20 18" fill="none" stroke={ink} strokeWidth="1.700">
        <path d="M4 15.800V6M1 8.500l3-3 3 3M5.500 3.500V1.800h10.500v10M13 9.300l3 3 3-3M3.200 15.800h10.800v-2" />
      </svg>
    </StatusItem>
    <StatusItem $w={28}>
      <svg width="12" height="17" viewBox="0 0 12 17" fill="none" stroke={ink} strokeWidth="1.200">
        <path d="M1.500 4.500l8 7.500L6 15.500v-14L9.500 5l-8 7.500" />
      </svg>
    </StatusItem>
    <StatusItem $w={30}>
      <svg width="20" height="15" viewBox="0 0 20 15" fill="none" stroke={ink} strokeWidth="2">
        <path d="M.8 5.200a13 13 0 0 1 18.400 0M3.900 8.300a8.700 8.700 0 0 1 12.200 0M7 11.200a4.500 4.500 0 0 1 6 0" />
        <path d="M10 14.800l-1.900-2.200a2.600 2.600 0 0 1 3.800 0z" fill={ink} stroke="none" />
      </svg>
    </StatusItem>
    <StatusItem $w={32}>
      <svg width="21" height="14" viewBox="0 0 21 14">
        <path d="M0 4.500h3.500L8 1v12L3.500 9.500H0z" fill={ink} />
        <path d="M10.500 4.500c1.200 1.300 1.200 3.700 0 5M13.500 2.700c2.200 2.300 2.200 6.300 0 8.600M16.700 1c3.100 3.300 3.100 8.700 0 12" fill="none" stroke={ink} strokeWidth="1.200" />
      </svg>
    </StatusItem>
    <StatusItem $w={39}><Percent>100%</Percent></StatusItem>
    <StatusItem $w={25}>
      <svg width="24" height="13" viewBox="0 0 24 13">
        <rect x=".8" y=".8" width="19.500" height="11.400" rx="1.500" fill="none" stroke={ink} strokeWidth="1.300" />
        <rect x="2.600" y="2.600" width="15.900" height="7.800" fill={ink} />
        <path d="M21.500 4.300c1.500.5 1.500 4 0 4.500z" fill={ink} />
        <path d="M11.500 1L5.500 7.300h4L8 12l6.800-6.500h-4.300L12.500 1z" fill={ink} stroke="#c7d8f1" strokeWidth="1.100" />
      </svg>
    </StatusItem>
    <StatusItem $w={120}><Clock>Tue 1:04 PM</Clock></StatusItem>
    <StatusItem $w={22}>
      <svg width="15" height="15" viewBox="0 0 15 15" fill="none" stroke={ink}>
        <circle cx="6" cy="6" r="4.900" strokeWidth="1.300" />
        <path d="M9.500 9.500l4.500 4.500" strokeWidth="1.600" />
      </svg>
    </StatusItem>
    <StatusItem $w={44}>
      <svg width="17" height="17" viewBox="0 0 17 17">
        <circle cx="8.500" cy="8.500" r="8" fill="#1b1746" />
        <path d="M2 8C3 3 6 2 9 2s6 3 6 6c-3-2-4-3-6-3S5 8 2 8z" fill="#b02fc0" opacity=".7" />
        <path d="M2 9c1 4 3 6 6.500 6S14 13 15 9c-3-1-4-3-6.500-3S5 9 2 9z" fill="#1f62c4" opacity=".9" />
        <path d="M8.500 5.500l4.500 4.500-3.200-1.200.7 4.200-2-3.500L5.500 13l1.200-3.800L3.500 10.500z" fill="#a6eaf8" />
      </svg>
    </StatusItem>
    <StatusItem $w={16}>
      <svg width="18" height="12" viewBox="0 0 18 12" stroke={ink} strokeWidth="1.800">
        <path d="M0 1.400h2M4 1.400h11.500M0 6h2M4 6h10M0 10.600h2M4 10.600h13.500" />
      </svg>
    </StatusItem>
  </StatusItems>
);

const NavIcon = ({ d }: { d: string }) => (
  <svg width="16" height="16" viewBox="0 0 16 16" fill="none" stroke="#a9abae" strokeWidth="1.700">
    <path d={d} />
  </svg>
);

export default function App() {
  return (
    <Desktop>
      <GlobalStyle />
      <Gradients />
      <MenuBar>
        <AppleSlot><AppleMark /></AppleSlot>
        <AppName>ScreenShots</AppName>
        <MenuExtras />
      </MenuBar>
      <Window>
        <TabStrip>
          <WindowButtons>
            <WindowButton />
            <WindowButton />
            <WindowButton />
          </WindowButtons>
          <Tab>
            <svg width="16" height="16" viewBox="0 0 16 16" fill="none" stroke="#77797c" strokeWidth="1.300">
              <path d="M1.500 3c1.400-1.200 3-1.700 5-1.600" />
            </svg>
            <TabTitle>TestLeaf - Interact with HyperL</TabTitle>
            <svg width="10" height="10" viewBox="0 0 10 10" stroke="#45484c" strokeWidth="1.500">
              <path d="M1 1l8 8M9 1L1 9" />
            </svg>
          </Tab>
          <NewTab>
            <svg width="14" height="14" viewBox="0 0 14 14" stroke="#3f4246" strokeWidth="1.700">
              <path d="M7 1v12M1 7h12" />
            </svg>
          </NewTab>
        </TabStrip>
        <Toolbar>
          <NavButtons>
            <NavIcon d="M15 8H2M8.300 1.500L1.800 8l6.500 6.500" />
            <NavIcon d="M1 8h13M7.700 1.500L14.200 8l-6.500 6.500" />
            <NavIcon d="M2 2l12 12M14 2L2 14" />
          </NavButtons>
          <Omnibox>
            <svg width="16" height="16" viewBox="0 0 16 16" fill="none" stroke="#4c4f53">
              <circle cx="8" cy="8" r="6.300" strokeWidth="1.500" />
              <path d="M8 7v4.500M8 4.300v1.600" strokeWidth="1.600" />
            </svg>
            <Security>Not Secure</Security>
            <Divider />
            <Url><Host>leafground.com</Host>/pages/Link.html</Url>
            <svg width="16" height="16" viewBox="0 0 16 16" fill="none" stroke="#4c4f53" strokeWidth="1.400">
              <path d="M8 1.800l1.800 4.300 4.600.4-3.500 3 1.050 4.500L8 11.600 4.050 14l1.050-4.500-3.500-3 4.600-.4z" />
            </svg>
          </Omnibox>
          <Actions>
            <svg width="20" height="20" viewBox="0 0 20 20">
              <rect x="2" y="2" width="16" height="16" rx="1.500" fill="#505254" />
              <text x="10" y="14.200" fontSize="11.500" fontWeight="700" fill="#fff" textAnchor="middle" fontFamily="Inter, sans-serif">C</text>
            </svg>
            <svg width="20" height="20" viewBox="0 0 20 20" fill="#4c4f55">
              <path d="M16 9.300h-.9V6.300c0-.8-.6-1.400-1.400-1.400h-2.900v-.8a1.900 1.900 0 0 0-3.800 0v.8H4.100c-.8 0-1.400.6-1.400 1.400v2.800h.9a2 2 0 0 1 0 4h-.9V16c0 .8.600 1.400 1.400 1.400h2.800v-.8a2 2 0 0 1 4 0v.8h2.800c.8 0 1.400-.6 1.400-1.400v-2.900h.9a1.900 1.900 0 0 0 0-3.800z" />
            </svg>
            <svg width="20" height="20" viewBox="0 0 20 20">
              <circle cx="10" cy="10" r="9.300" fill="#aeb0b2" />
              <circle cx="10" cy="6.900" r="3" fill="#fff" />
              <path d="M4.200 14.300c0-2.300 3.900-3.400 5.800-3.400s5.800 1.100 5.800 3.400c-2.700 3.400-8.900 3.400-11.600 0z" fill="#fff" />
            </svg>
            <svg width="20" height="20" viewBox="0 0 20 20" fill="#97999c">
              <circle cx="10.500" cy="5" r="1.500" />
              <circle cx="10.500" cy="10" r="1.500" />
              <circle cx="10.500" cy="15" r="1.500" />
            </svg>
          </Actions>
        </Toolbar>
        <Content>
          <Banner><Logo /></Banner>
          <Heading>Play with HyperLinks</Heading>
          <LinkList>
            <LinkRow><PageLink $color="#d0040e">Go to Home Page</PageLink></LinkRow>
            <LinkRow><PageLink $color="#0c7f0c">Find where am supposed to go without clicking me?</PageLink></LinkRow>
            <LinkRow><PageLink $color="#3a00e8">Verify am I broken?</PageLink></LinkRow>
            <LinkRow $gap={68}><PageLink $color="#d0040e">Go to Home Page</PageLink> (Interact with same link name)</LinkRow>
            <LinkRow><PageLink $color="#3a00e8">How many links are available in this page?</PageLink></LinkRow>
          </LinkList>
        </Content>
      </Window>
      <Dock />
    </Desktop>
  );
}
